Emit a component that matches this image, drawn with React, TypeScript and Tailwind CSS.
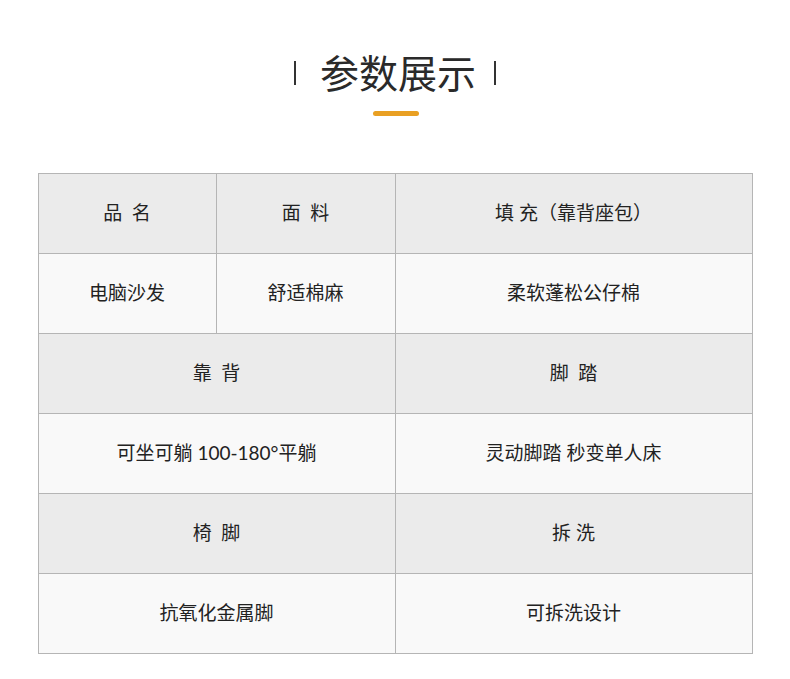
const rows: { cells: { text: string; span?: number }[]; head: boolean }[] = [
  { head: true, cells: [{ text: "品\u2002名" }, { text: "面\u2002料" }, { text: "填 充（靠背座包）" }] },
  { head: false, cells: [{ text: "电脑沙发" }, { text: "舒适棉麻" }, { text: "柔软蓬松公仔棉" }] },
  { head: true, cells: [{ text: "靠\u2002背", span: 2 }, { text: "脚\u2002踏" }] },
  { head: false, cells: [{ text: "可坐可躺 100-180°平躺", span: 2 }, { text: "灵动脚踏 秒变单人床" }] },
  { head: true, cells: [{ text: "椅\u2002脚", span: 2 }, { text: "拆 洗" }] },
  { head: false, cells: [{ text: "抗氧化金属脚", span: 2 }, { text: "可拆洗设计" }] },
];

const App = () => {
  return (
    <div
      className="w-[790px] h-[679px] bg-white text-[#222]"
      style={{ fontFamily: 'Lato, "Noto Sans CJK SC", sans-serif' }}
    >
      <div className="flex flex-col items-center pt-[52px]">
        <div className="flex items-center">
          <span className="w-[2px] h-[24px] bg-[#333]" />
          <h1 className="text-[39px] leading-[42px] font-normal text-[#2a2a2a] ml-[24px] mr-[18px]">
            参数展示
          </h1>
          <span className="w-[2px] h-[24px] bg-[#333]" />
        </div>
        <div className="w-[46px] h-[5px] rounded-full bg-[#e9a023] mt-[17px] ml-[2px]" />
      </div>

      <table className="mx-auto mt-[57px] w-[714px] border-collapse table-fixed">
        <colgroup>
          <col className="w-[178px]" />
          <col className="w-[179px]" />
          <col className="w-[357px]" />
        </colgroup>
        <tbody>
          {rows.map((row, i) => (
            <tr key={i} className={row.head ? "bg-[#ebebeb]" : "bg-[#f9f9f9]"}>
              {row.cells.map((c, j) => (
                <td
                  key={j}
                  colSpan={c.span}
                  className="h-[80px] border border-[#b5b5b5] text-center text-[19px] font-normal whitespace-pre"
                >
                  {c.text}
                </td>
              ))}
            </tr>
          ))}
        </tbody>
      </table>
    </div>
  );
};

export default App;
